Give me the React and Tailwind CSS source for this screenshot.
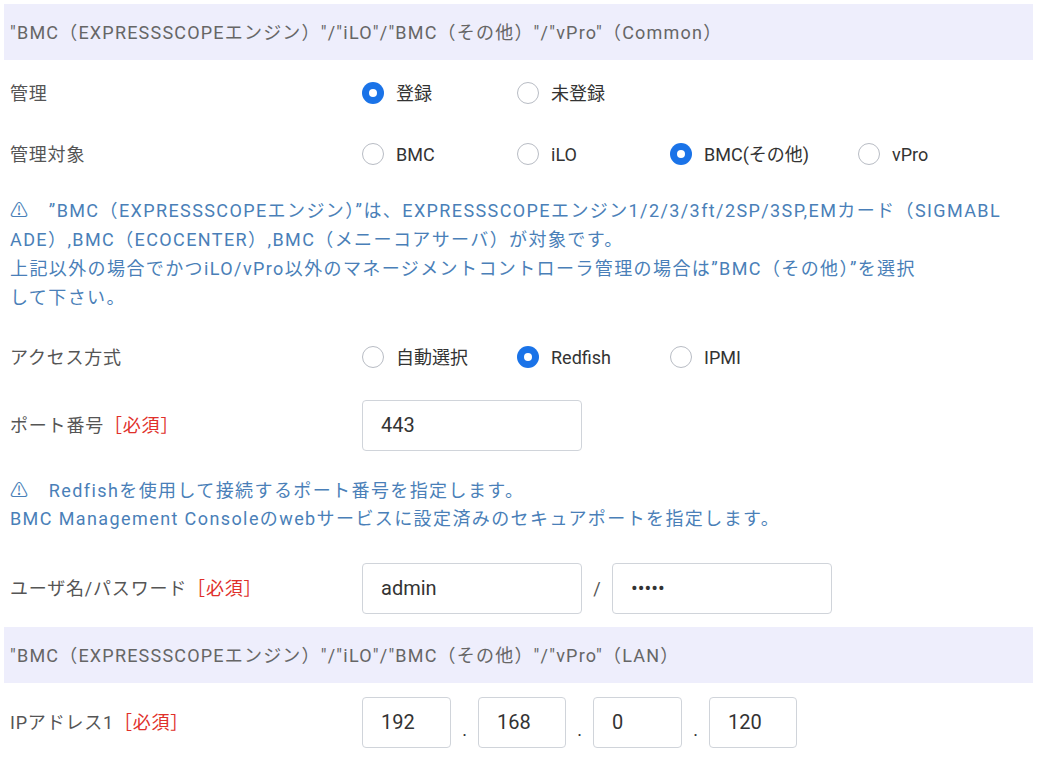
import React from "react";

const font = { fontFamily: "Roboto, 'Noto Sans CJK JP', sans-serif" };

function Radio({ label, checked, w }) {
  return (
    <label className={`flex items-center gap-[12px] ${w}`}>
      <span
        className={`w-[22px] h-[22px] rounded-full flex items-center justify-center ${
          checked ? "bg-[#1a73e8]" : "border border-[#b8bcc4] bg-white"
        }`}
      >
        {checked && <span className="w-[8px] h-[8px] rounded-full bg-white" />}
      </span>
      <span className="text-[18px] text-[#333]">{label}</span>
    </label>
  );
}

function Row({ label, req, h, children }) {
  return (
    <div className={`flex items-center ${h}`}>
      <div className="w-[362px] pl-[10px] text-[18px] tracking-[0.8px] text-[#555]">
        {label}
        {req && <span className="text-[#e0302a]">［必須］</span>}
      </div>
      <div className="flex items-center">{children}</div>
    </div>
  );
}

function Box({ v, w }) {
  return (
    <div className={`${w} h-[51px] border border-[#d0d4da] rounded-[4px] flex items-center pl-[18px] text-[20px] text-[#333]`}>
      {v}
    </div>
  );
}

function Header({ text }) {
  return (
    <div className="mx-[4px] h-[56px] bg-[#eeeefc] flex items-center pl-[6px] text-[18px] tracking-[1.2px] text-[#666]">
      {text}
    </div>
  );
}

export default function App() {
  return (
    <div className="w-[1037px] h-[767px] bg-white pt-[4px] overflow-hidden" style={font}>
      <Header text={'"BMC（EXPRESSSCOPEエンジン）"/"iLO"/"BMC（その他）"/"vPro"（Common）'} />
      <Row label="管理" h="h-[66px]">
        <Radio label="登録" checked w="w-[155px]" />
        <Radio label="未登録" />
      </Row>
      <Row label="管理対象" h="h-[56px]">
        <Radio label="BMC" w="w-[155px]" />
        <Radio label="iLO" w="w-[153px]" />
        <Radio label="BMC(その他)" checked w="w-[188px]" />
        <Radio label="vPro" />
      </Row>
      <div className="pl-[10px] pt-[14px] pb-[19px] text-[18px] tracking-[1.4px] leading-[29px] text-[#4a7fb8] w-[1030px] whitespace-nowrap">
        <div>⚠　”BMC（EXPRESSSCOPEエンジン）”は、EXPRESSSCOPEエンジン1/2/3/3ft/2SP/3SP,EMカード（SIGMABL</div>
        <div>ADE）,BMC（ECOCENTER）,BMC（メニーコアサーバ）が対象です。</div>
        <div>上記以外の場合でかつiLO/vPro以外のマネージメントコントローラ管理の場合は”BMC（その他）”を選択</div>
        <div>して下さい。</div>
      </div>
      <Row label="アクセス方式" h="h-[52px]">
        <Radio label="自動選択" w="w-[155px]" />
        <Radio label="Redfish" checked w="w-[153px]" />
        <Radio label="IPMI" />
      </Row>
      <Row label="ポート番号" req h="h-[84px]">
        <Box v="443" w="w-[220px]" />
      </Row>
      <div className="pl-[10px] pt-[10px] pb-[24px] text-[18px] tracking-[1.4px] leading-[28px] text-[#4a7fb8] whitespace-nowrap">
        <div>⚠　Redfishを使用して接続するポート番号を指定します。</div>
        <div>BMC Management Consoleのwebサービスに設定済みのセキュアポートを指定します。</div>
      </div>
      <Row label="ユーザ名/パスワード" req h="h-[62px]">
        <Box v="admin" w="w-[220px]" />
        <span className="w-[30px] text-center text-[18px] text-[#555]">/</span>
        <Box v="•••••" w="w-[220px]" />
      </Row>
      <div className="h-[8px]" />
      <Header text={'"BMC（EXPRESSSCOPEエンジン）"/"iLO"/"BMC（その他）"/"vPro"（LAN）'} />
      <Row label="IPアドレス1" req h="h-[78px]">
        <Box v="192" w="w-[89px]" />
        <span className="w-[27px] text-center text-[18px] text-[#333] pt-[14px]">.</span>
        <Box v="168" w="w-[88px]" />
        <span className="w-[27px] text-center text-[18px] text-[#333] pt-[14px]">.</span>
        <Box v="0" w="w-[89px]" />
        <span className="w-[27px] text-center text-[18px] text-[#333] pt-[14px]">.</span>
        <Box v="120" w="w-[88px]" />
      </Row>
    </div>
  );
}
